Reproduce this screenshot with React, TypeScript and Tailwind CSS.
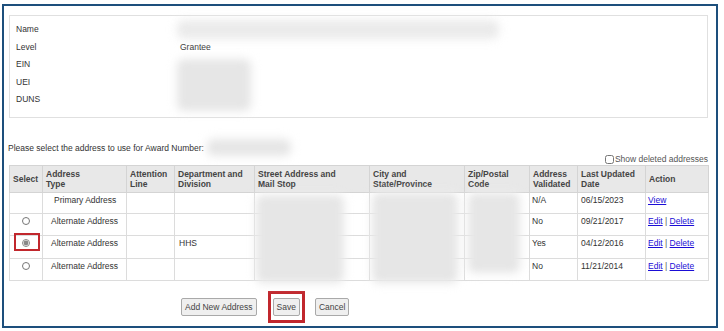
import React, { useState } from "react";

// Lignes du tableau d'adresses
const rows = [
  { type: "Primary Address", dept: "", validated: "N/A", date: "06/15/2023", view: true },
  { type: "Alternate Address", dept: "", validated: "No", date: "09/21/2017", view: false },
  { type: "Alternate Address", dept: "HHS", validated: "Yes", date: "04/12/2016", view: false },
  { type: "Alternate Address", dept: "", validated: "No", date: "11/21/2014", view: false },
];

// Zone floutée (données masquées)
const Blur: React.FC<{ className: string }> = ({ className }) => (
  <div
    className={`absolute bg-[#e6e6e6] blur-[3px] shadow-[0_0_6px_4px_#ececec] rounded-[4px] ${className}`}
  />
);

const cell = "border border-[#dcdcdc] align-top px-[3px] pt-[1px]";
const head = "border border-[#d4d4d4] bg-[#e8e8e8] text-left align-middle px-[3px] font-bold leading-[10px] text-[#444]";
const btn = "h-[18px] px-[3px] border border-[#a9a9a9] rounded-[2px] bg-[#efefef] text-[#444] leading-none";

const App: React.FC = () => {
  const [selected, setSelected] = useState(2);
  const [showDeleted, setShowDeleted] = useState(false);

  return (
    <div className="w-[724px] h-[331px] bg-white pt-[4px] pl-[2px] font-['Liberation_Sans',Arial,sans-serif] text-[8.5px] text-[#333]">
      <div className="relative w-[716px] h-[324px] border-2 border-[#1d4f7c] px-[5px] pt-[9px]">
        {/* Infos du bénéficiaire */}
        <div className="relative w-[699px] h-[103px] border border-[#e0e0e0] pl-[6px] pt-[5px]">
          {["Name", "Level", "EIN", "UEI", "DUNS"].map((label) => (
            <div key={label} className="flex h-[17.5px] items-center">
              <div className="w-[164px]">{label}</div>
              <div>{label === "Level" ? "Grantee" : ""}</div>
            </div>
          ))}
          <Blur className="left-[170px] top-[7px] w-[316px] h-[13px] opacity-80" />
          <Blur className="left-[170px] top-[46px] w-[68px] h-[46px]" />
        </div>

        <div className="relative mt-[24px] ml-[-1px] leading-[12px]">
          Please select the address to use for Award Number:
          <Blur className="left-[202px] top-[0px] w-[78px] h-[11px]" />
        </div>

        <div className="flex justify-end items-center h-[11px] mt-[0px] pr-[3px]">
          <input
            type="checkbox"
            checked={showDeleted}
            onChange={(e) => setShowDeleted(e.target.checked)}
            className="w-[9px] h-[9px] m-0 mr-[1px]"
          />
          <span className="text-[#555]">Show deleted addresses</span>
        </div>

        {/* Tableau des adresses */}
        <div className="relative">
          <table className="border-collapse w-[699px] table-fixed">
            <colgroup>
              <col className="w-[33px]" />
              <col className="w-[84px]" />
              <col className="w-[48px]" />
              <col className="w-[80px]" />
              <col className="w-[115px]" />
              <col className="w-[95px]" />
              <col className="w-[65px]" />
              <col className="w-[48px]" />
              <col className="w-[68px]" />
              <col className="w-[63px]" />
            </colgroup>
            <thead>
              <tr className="h-[27px]">
                <th className={head}>Select</th>
                <th className={head}>Address<br />Type</th>
                <th className={head}>Attention<br />Line</th>
                <th className={head}>Department and<br />Division</th>
                <th className={head}>Street Address and<br />Mail Stop</th>
                <th className={head}>City and<br />State/Province</th>
                <th className={head}>Zip/Postal<br />Code</th>
                <th className={head}>Address<br />Validated</th>
                <th className={head}>Last Updated<br />Date</th>
                <th className={head}>Action</th>
              </tr>
            </thead>
            <tbody>
              {rows.map((r, i) => (
                <tr key={i} className={i === 2 ? "h-[23px]" : i === 0 ? "h-[21px]" : "h-[22px]"}>
                  <td className={`${cell} text-center`}>
                    {!r.view && (
                      <div className="relative flex justify-center">
                        <input
                          type="radio"
                          name="addr"
                          checked={selected === i}
                          onChange={() => setSelected(i)}
                          className="w-[8px] h-[8px] m-0 mt-[2px] accent-[#888]"
                        />
                        {selected === i && (
                          <div className="absolute left-[1px] top-[-4px] w-[26px] h-[18px] border-2 border-[#c1272d]" />
                        )}
                      </div>
                    )}
                  </td>
                  <td className={`${cell} ${r.view ? "pl-[11px]" : "pl-[8px]"}`}>{r.type}</td>
                  <td className={cell}></td>
                  <td className={`${cell} pl-[4px]`}>{r.dept}</td>
                  <td className={cell}></td>
                  <td className={cell}></td>
                  <td className={cell}></td>
                  <td className={`${cell} pl-[2px]`}>{r.validated}</td>
                  <td className={cell}>{r.date}</td>
                  <td className={`${cell} pl-[2px]`}>
                    {r.view ? (
                      <a href="#" className="text-[#1a0dd6] underline">View</a>
                    ) : (
                      <>
                        <a href="#" className="text-[#1a0dd6] underline">Edit</a>
                        <span className="text-[#555]"> | </span>
                        <a href="#" className="text-[#1a0dd6] underline">Delete</a>
                      </>
                    )}
                  </td>
                </tr>
              ))}
            </tbody>
          </table>
          <Blur className="left-[250px] top-[33px] w-[82px] h-[82px]" />
          <Blur className="left-[366px] top-[31px] w-[80px] h-[84px]" />
          <Blur className="left-[462px] top-[31px] w-[46px] h-[74px]" />
        </div>

        {/* Boutons */}
        <div className="flex items-center mt-[10px] pl-[172px]">
          <button className={btn}>Add New Address</button>
          <div className="ml-[11px] border-[3px] border-[#c1272d] px-[2px] py-[4px]">
            <button className={btn}>Save</button>
          </div>
          <button className={`ml-[10px] ${btn}`}>Cancel</button>
        </div>
      </div>
    </div>
  );
};

export default App;
